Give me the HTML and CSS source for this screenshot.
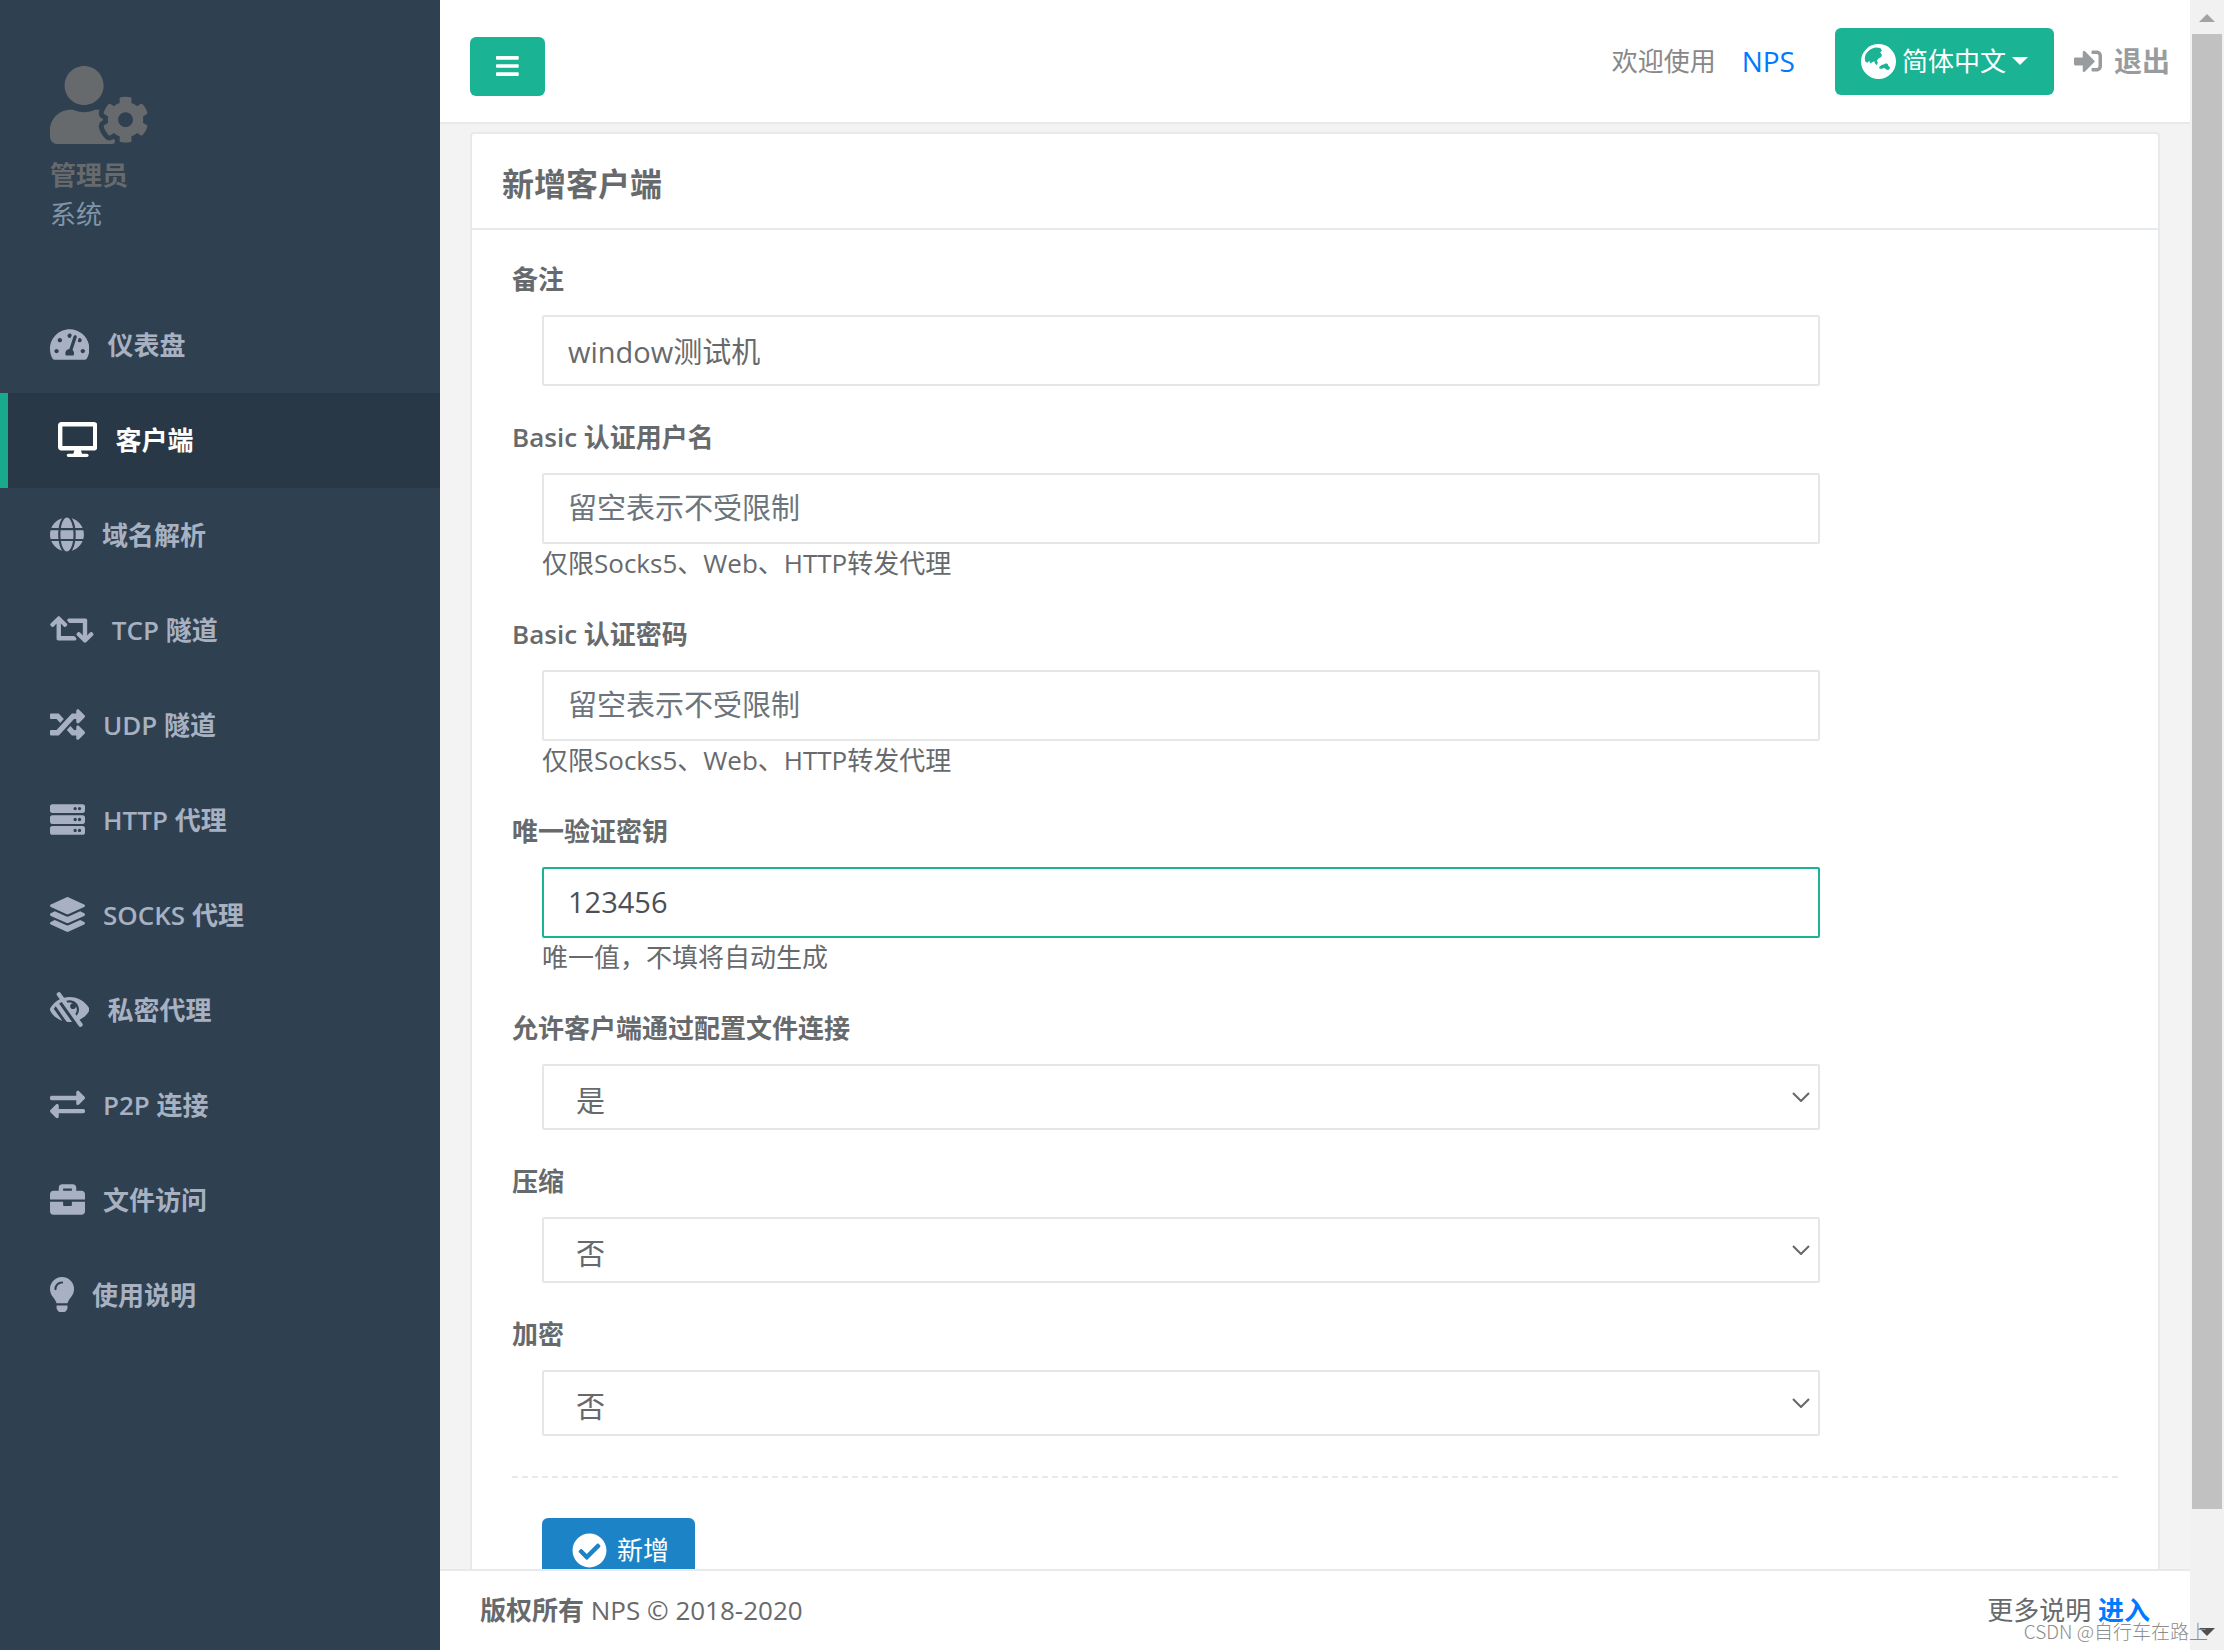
FILE: index.html
```html
<!DOCTYPE html>
<html lang="zh-CN">
<head>
<meta charset="utf-8">
<meta name="viewport" content="width=device-width, initial-scale=1">
<title>NPS</title>
<link rel="stylesheet" href="styles.css">
</head>
<body>
<div class="app">
  <aside class="sidebar">
    <div class="profile">
      <svg class="avatar" viewBox="0 0 640 512" aria-hidden="true"><path d="M610.5 373.3c2.6-14.1 2.6-28.5 0-42.6l25.8-14.9c3-1.7 4.3-5.2 3.3-8.5-6.7-21.6-18.2-41.2-33.2-57.4-2.3-2.5-6-3.1-9-1.4l-25.8 14.9c-10.9-9.3-23.4-16.5-36.9-21.3v-29.8c0-3.4-2.4-6.4-5.7-7.1-22.3-5-45-4.8-66.2 0-3.3.7-5.7 3.7-5.7 7.1v29.8c-13.5 4.8-26 12-36.9 21.3l-25.8-14.9c-2.9-1.7-6.7-1.1-9 1.4-15 16.2-26.5 35.8-33.2 57.4-1 3.3.4 6.8 3.3 8.5l25.8 14.9c-2.6 14.1-2.6 28.5 0 42.6l-25.8 14.9c-3 1.7-4.3 5.2-3.3 8.5 6.7 21.6 18.2 41.1 33.2 57.4 2.3 2.5 6 3.1 9 1.4l25.8-14.9c10.9 9.3 23.4 16.5 36.9 21.3v29.8c0 3.4 2.4 6.4 5.7 7.1 22.3 5 45 4.8 66.2 0 3.3-.7 5.7-3.7 5.7-7.1v-29.8c13.5-4.8 26-12 36.9-21.3l25.8 14.9c2.9 1.7 6.7 1.1 9-1.4 15-16.2 26.5-35.8 33.2-57.4 1-3.3-.4-6.8-3.3-8.5l-25.8-14.9zM496 400.5c-26.8 0-48.5-21.8-48.5-48.5s21.8-48.5 48.5-48.5 48.5 21.8 48.5 48.5-21.7 48.5-48.5 48.5zM224 256c70.7 0 128-57.3 128-128S294.7 0 224 0 96 57.3 96 128s57.3 128 128 128zm201.2 226.5c-2.3-1.2-4.6-2.6-6.8-3.9l-7.9 4.6c-6 3.4-12.8 5.3-19.6 5.3-10.9 0-21.4-4.6-28.9-12.6-18.3-19.8-32.3-43.9-40.2-69.6-5.5-17.7 1.9-36.4 17.9-45.7l7.9-4.6c-.1-2.6-.1-5.2 0-7.8l-7.9-4.6c-16-9.2-23.4-28-17.9-45.7.9-2.9 2.2-5.8 3.2-8.7-3.8-.3-7.5-1.2-11.4-1.2h-16.7c-22.2 10.2-46.9 16-72.9 16s-50.6-5.8-72.9-16h-16.7C60.2 288 0 348.2 0 422.4V464c0 26.5 21.5 48 48 48h352c10.1 0 19.5-3.2 27.2-8.5-1.2-3.8-2-7.7-2-11.8v-9.2z"/></svg>
      <strong class="profile-name">管理员</strong>
      <span class="profile-role">系统</span>
    </div>
    <nav>
      <ul class="menu">
        <li><a class="menu-link" href="#"><svg class="icon" viewBox="0 0 576 512"><path d="M288 32C128.94 32 0 160.94 0 320c0 52.8 14.25 102.26 39.06 144.8 5.61 9.62 16.3 15.2 27.44 15.2h443c11.14 0 21.83-5.58 27.44-15.2C561.75 422.26 576 372.8 576 320c0-159.06-128.94-288-288-288zm0 64c14.71 0 26.58 10.13 30.32 23.65-1.11 2.26-2.64 4.23-3.45 6.67l-9.22 27.67c-5.13 3.49-10.97 6.01-17.64 6.01-17.67 0-32-14.33-32-32S270.33 96 288 96zM96 384c-17.67 0-32-14.33-32-32s14.33-32 32-32 32 14.33 32 32-14.33 32-32 32zm48-160c-17.67 0-32-14.33-32-32s14.33-32 32-32 32 14.33 32 32-14.33 32-32 32zm246.77-72.41l-61.33 184C343.13 347.33 352 364.54 352 384c0 11.72-3.38 22.55-8.88 32H232.88c-5.5-9.45-8.88-20.28-8.88-32 0-33.94 26.5-61.43 59.9-63.59l61.34-184.01c4.17-12.56 17.73-19.45 30.36-15.17 12.57 4.19 19.35 17.79 15.17 30.36zm14.66 57.2l15.52-46.55c3.47-1.29 7.13-2.23 11.05-2.23 17.67 0 32 14.33 32 32s-14.33 32-32 32c-11.38-.01-20.89-6.28-26.57-15.22zM480 384c-17.67 0-32-14.33-32-32s14.33-32 32-32 32 14.33 32 32-14.33 32-32 32z"/></svg><span>仪表盘</span></a></li>
        <li><a class="menu-link menu-link-active" href="#" aria-current="page"><svg class="icon" viewBox="0 0 576 512"><path d="M528 0H48C21.5 0 0 21.5 0 48v320c0 26.5 21.5 48 48 48h192l-16 48h-72c-13.3 0-24 10.7-24 24s10.7 24 24 24h272c13.3 0 24-10.7 24-24s-10.7-24-24-24h-72l-16-48h192c26.5 0 48-21.5 48-48V48c0-26.5-21.5-48-48-48zm-16 352H64V64h448v288z"/></svg><span>客户端</span></a></li>
        <li><a class="menu-link" href="#"><svg class="icon" viewBox="0 0 496 512"><path d="M336.5 160C322 70.7 287.8 8 248 8s-74 62.7-88.5 152h177zM152 256c0 22.2 1.2 43.5 3.3 64h185.3c2.1-20.5 3.3-41.8 3.3-64s-1.2-43.5-3.3-64H155.3c-2.1 20.5-3.3 41.8-3.3 64zm324.7-96c-28.6-67.9-86.5-120.4-158-141.6 24.4 33.8 41.2 84.7 50 141.6h108zM177.2 18.4C105.8 39.6 47.8 92.1 19.3 160h108c8.7-56.9 25.5-107.8 49.9-141.6zM487.4 192H372.7c2.1 21 3.3 42.5 3.3 64s-1.2 43-3.3 64h114.6c5.5-20.5 8.6-41.8 8.6-64s-3.1-43.5-8.5-64zM120 256c0-21.5 1.2-43 3.3-64H8.6C3.2 212.5 0 233.8 0 256s3.2 43.5 8.6 64h114.6c-2-21-3.2-42.5-3.2-64zm39.5 96c14.5 89.3 48.7 152 88.5 152s74-62.7 88.5-152h-177zm159.3 141.6c71.4-21.2 129.4-73.7 158-141.6h-108c-8.8 56.9-25.6 107.8-50 141.6zM19.3 352c28.6 67.9 86.5 120.4 158 141.6-24.4-33.8-41.2-84.7-50-141.6h-108z"/></svg><span>域名解析</span></a></li>
        <li><a class="menu-link" href="#"><svg class="icon" viewBox="0 0 640 512"><path d="M629.657 343.598L528.971 444.284c-9.373 9.372-24.568 9.372-33.941 0L394.343 343.598c-9.373-9.373-9.373-24.569 0-33.941l10.823-10.823c9.562-9.562 25.133-9.34 34.419.492L480 342.118V160H292.451a24.005 24.005 0 0 1-16.971-7.029l-16-16C244.361 121.851 255.069 96 276.451 96H520c13.255 0 24 10.745 24 24v222.118l40.416-42.792c9.285-9.831 24.856-10.054 34.419-.492l10.823 10.823c9.372 9.372 9.372 24.569-.001 33.941zm-265.138 15.431A23.999 23.999 0 0 0 347.548 352H160V169.881l40.416 42.792c9.286 9.831 24.856 10.054 34.419.491l10.822-10.822c9.373-9.373 9.373-24.569 0-33.941L144.971 67.716c-9.373-9.373-24.569-9.373-33.941 0L10.343 168.402c-9.373 9.373-9.373 24.569 0 33.941l10.822 10.822c9.562 9.562 25.133 9.34 34.419-.491L96 169.882V392c0 13.255 10.745 24 24 24h243.549c21.382 0 32.09-25.851 16.971-40.971l-16.001-16z"/></svg><span><span class="latin">TCP</span> 隧道</span></a></li>
        <li><a class="menu-link" href="#"><svg class="icon" viewBox="0 0 512 512"><path d="M504.971 359.029c9.373 9.373 9.373 24.569 0 33.941l-80 79.984c-15.01 15.01-40.971 4.49-40.971-16.971V416h-58.785a12.004 12.004 0 0 1-8.773-3.812l-70.556-75.596 53.333-57.143L352 336h32v-39.981c0-21.438 25.943-31.998 40.971-16.971l80 79.981zM12 176h84l52.781 56.551 53.333-57.143-70.556-75.596A11.999 11.999 0 0 0 122.785 96H12c-6.627 0-12 5.373-12 12v56c0 6.627 5.373 12 12 12zm372 0v39.984c0 21.46 25.961 31.98 40.971 16.971l80-79.984c9.373-9.373 9.373-24.569 0-33.941l-80-79.981C409.943 24.021 384 34.582 384 56.019V96h-58.785a12.004 12.004 0 0 0-8.773 3.812L96 336H12c-6.627 0-12 5.373-12 12v56c0 6.627 5.373 12 12 12h110.785c3.326 0 6.503-1.381 8.773-3.812L352 176h32z"/></svg><span><span class="latin">UDP</span> 隧道</span></a></li>
        <li><a class="menu-link" href="#"><svg class="icon" viewBox="0 0 512 512"><path d="M480 160H32c-17.673 0-32-14.327-32-32V64c0-17.673 14.327-32 32-32h448c17.673 0 32 14.327 32 32v64c0 17.673-14.327 32-32 32zm-48-88c-13.255 0-24 10.745-24 24s10.745 24 24 24 24-10.745 24-24-10.745-24-24-24zm-64 0c-13.255 0-24 10.745-24 24s10.745 24 24 24 24-10.745 24-24-10.745-24-24-24zM480 320H32c-17.673 0-32-14.327-32-32v-64c0-17.673 14.327-32 32-32h448c17.673 0 32 14.327 32 32v64c0 17.673-14.327 32-32 32zm-48-88c-13.255 0-24 10.745-24 24s10.745 24 24 24 24-10.745 24-24-10.745-24-24-24zm-64 0c-13.255 0-24 10.745-24 24s10.745 24 24 24 24-10.745 24-24-10.745-24-24-24zM480 480H32c-17.673 0-32-14.327-32-32v-64c0-17.673 14.327-32 32-32h448c17.673 0 32 14.327 32 32v64c0 17.673-14.327 32-32 32zm-48-88c-13.255 0-24 10.745-24 24s10.745 24 24 24 24-10.745 24-24-10.745-24-24-24zm-64 0c-13.255 0-24 10.745-24 24s10.745 24 24 24 24-10.745 24-24-10.745-24-24-24z"/></svg><span><span class="latin">HTTP</span> 代理</span></a></li>
        <li><a class="menu-link" href="#"><svg class="icon" viewBox="0 0 512 512"><path d="M12.41 148.02l232.94 105.67c6.8 3.09 14.49 3.09 21.29 0l232.94-105.67c16.55-7.51 16.55-32.52 0-40.03L266.65 2.31a25.607 25.607 0 0 0-21.29 0L12.41 107.98c-16.55 7.51-16.55 32.53 0 40.04zm487.18 88.28l-58.09-26.33-161.64 73.27c-7.56 3.43-15.59 5.17-23.86 5.17s-16.29-1.74-23.86-5.17L70.51 209.97l-58.1 26.33c-16.55 7.5-16.55 32.5 0 40l232.94 105.59c6.8 3.08 14.49 3.08 21.29 0L499.59 276.3c16.55-7.5 16.55-32.5 0-40zm0 127.8l-57.87-26.23-161.86 73.37c-7.56 3.43-15.59 5.17-23.86 5.17s-16.29-1.74-23.86-5.17L70.29 337.87 12.41 364.1c-16.55 7.5-16.55 32.5 0 40l232.94 105.59c6.8 3.08 14.49 3.08 21.29 0L499.59 404.1c16.55-7.5 16.55-32.5 0-40z"/></svg><span><span class="latin">SOCKS</span> 代理</span></a></li>
        <li><a class="menu-link" href="#"><svg class="icon" viewBox="0 0 576 512"><path d="M569.344 231.631C512.96 135.949 407.81 72 288 72c-28.468 0-56.102 3.619-82.451 10.409L152.778 10.24c-7.601-10.858-22.564-13.5-33.423-5.9l-13.114 9.178c-10.86 7.601-13.502 22.566-5.9 33.426l43.131 58.395C89.449 131.73 40.228 174.683 6.682 231.581c-.01.017-.023.033-.034.05-8.765 14.875-8.964 33.528 0 48.739 38.5 65.332 99.742 115.862 172.859 141.349L55.316 244.302A272.194 272.194 0 0 1 83.61 208.39l119.4 170.58h.01l40.63 58.04a330.055 330.055 0 0 0 78.94 1.17l-189.98-271.4a277.628 277.628 0 0 1 38.777-21.563l251.836 356.544c7.601 10.858 22.564 13.499 33.423 5.9l13.114-9.178c10.86-7.601 13.502-22.567 5.9-33.426l-43.12-58.377-.007-.009c57.161-27.978 104.835-72.04 136.81-126.301a47.938 47.938 0 0 0 .001-48.739zM390.026 345.94l-19.066-27.23c24.682-32.567 27.711-76.353 8.8-111.68v.03c0 23.65-19.17 42.82-42.82 42.82-23.828 0-42.82-19.349-42.82-42.82 0-23.65 19.17-42.82 42.82-42.82h.03c-24.75-13.249-53.522-15.643-79.51-7.68l-19.068-27.237C253.758 123.306 270.488 120 288 120c75.162 0 136 60.826 136 136 0 34.504-12.833 65.975-33.974 89.94z"/></svg><span>私密代理</span></a></li>
        <li><a class="menu-link" href="#"><svg class="icon" viewBox="0 0 512 512"><path d="M0 168v-16c0-13.255 10.745-24 24-24h360V80c0-21.367 25.899-32.042 40.971-16.971l80 80c9.372 9.373 9.372 24.569 0 33.941l-80 80C409.956 271.982 384 261.456 384 240v-48H24c-13.255 0-24-10.745-24-24zm488 152H128v-48c0-21.314-25.862-32.08-40.971-16.971l-80 80c-9.372 9.373-9.372 24.569 0 33.941l80 80C102.057 463.997 128 453.437 128 432v-48h360c13.255 0 24-10.745 24-24v-16c0-13.255-10.745-24-24-24z"/></svg><span><span class="latin">P2P</span> 连接</span></a></li>
        <li><a class="menu-link" href="#"><svg class="icon" viewBox="0 0 512 512"><path d="M320 336c0 8.84-7.16 16-16 16h-96c-8.84 0-16-7.16-16-16v-48H0v144c0 25.6 22.4 48 48 48h416c25.6 0 48-22.4 48-48V288H320v48zm144-208h-80V80c0-25.6-22.4-48-48-48H176c-25.6 0-48 22.4-48 48v48H48c-25.6 0-48 22.4-48 48v80h512v-80c0-25.6-22.4-48-48-48zm-144 0H192V96h128v32z"/></svg><span>文件访问</span></a></li>
        <li><a class="menu-link" href="#"><svg class="icon" viewBox="0 0 352 512"><path d="M96.06 454.35c.01 6.29 1.87 12.45 5.36 17.69l17.09 25.69a31.99 31.99 0 0 0 26.64 14.28h61.71a31.99 31.99 0 0 0 26.64-14.28l17.09-25.69a31.989 31.989 0 0 0 5.36-17.69l.04-38.35H96.01l.05 38.35zM0 176c0 44.37 16.45 84.85 43.56 115.78 16.52 18.85 42.36 58.23 52.21 91.45.04.26.07.52.11.78h160.24c.04-.26.07-.51.11-.78 9.85-33.22 35.69-72.6 52.21-91.45C335.55 260.85 352 220.37 352 176 352 78.61 272.91-.3 175.45 0 73.44.31 0 82.97 0 176zm176-80c-44.11 0-80 35.89-80 80 0 8.84-7.16 16-16 16s-16-7.16-16-16c0-61.76 50.24-112 112-112 8.84 0 16 7.16 16 16s-7.16 16-16 16z"/></svg><span>使用说明</span></a></li>
      </ul>
    </nav>
  </aside>

  <div class="page">
    <header class="topbar">
      <button class="btn btn-menu" type="button" aria-label="菜单"><svg class="bars" viewBox="0 0 448 512"><path d="M16 132h416c8.837 0 16-7.163 16-16V76c0-8.837-7.163-16-16-16H16C7.163 60 0 67.163 0 76v40c0 8.837 7.163 16 16 16zm0 160h416c8.837 0 16-7.163 16-16v-40c0-8.837-7.163-16-16-16H16c-8.837 0-16 7.163-16 16v40c0 8.837 7.163 16 16 16zm0 160h416c8.837 0 16-7.163 16-16v-40c0-8.837-7.163-16-16-16H16c-8.837 0-16 7.163-16 16v40c0 8.837 7.163 16 16 16z"/></svg></button>
      <div class="topbar-right">
        <span class="welcome">欢迎使用</span>
        <a class="brand" href="#">NPS</a>
        <button class="btn btn-lang" type="button" aria-haspopup="true"><svg class="icon" viewBox="34 27 102 102"><path fill-rule="evenodd" d="M85 27a51 51 0 1 0 0 102a51 51 0 1 0 0-102zM46 62C51 48 63 39 78 37L90 39L95 46L90 52L95 58L93 65L85 69L80 75L83 81L80 89L75 84L73 77L67 80L61 84L58 76L53 82L47 79L45 70zM87 94L94 88L102 86L106 83L112 85L113 90L119 96L115 102L108 102L103 97L94 99L88 99z"/></svg><span>简体中文</span><svg class="caret" viewBox="0 0 16 8"><path d="M0 0h16l-8 8z"/></svg></button>
        <a class="logout" href="#"><svg class="logout-icon" viewBox="0 0 512 512"><path d="M416 448h-84c-6.6 0-12-5.4-12-12v-40c0-6.6 5.4-12 12-12h84c17.7 0 32-14.3 32-32V160c0-17.7-14.3-32-32-32h-84c-6.6 0-12-5.4-12-12V76c0-6.6 5.4-12 12-12h84c53 0 96 43 96 96v192c0 53-43 96-96 96zm-47-201L201 79c-15-15-41-4.5-41 17v96H24c-13.3 0-24 10.7-24 24v96c0 13.3 10.7 24 24 24h136v96c0 21.5 26 32 41 17l168-168c9.3-9.4 9.3-24.6 0-34z"/></svg><span>退出</span></a>
      </div>
    </header>

    <main class="content">
      <section class="card">
        <h1 class="card-title">新增客户端</h1>
        <form class="form">
          <div class="group">
            <label class="label" for="remark">备注</label>
            <div class="field"><input class="control" id="remark" type="text" value="window测试机"></div>
          </div>
          <div class="group">
            <label class="label" for="user"><span class="latin">Basic</span> 认证用户名</label>
            <div class="field"><input class="control" id="user" type="text" placeholder="留空表示不受限制"><span class="help">仅限Socks5、Web、HTTP转发代理</span></div>
          </div>
          <div class="group">
            <label class="label" for="password"><span class="latin">Basic</span> 认证密码</label>
            <div class="field"><input class="control" id="password" type="text" placeholder="留空表示不受限制"><span class="help">仅限Socks5、Web、HTTP转发代理</span></div>
          </div>
          <div class="group">
            <label class="label" for="vkey">唯一验证密钥</label>
            <div class="field"><input class="control control-active" id="vkey" type="text" value="123456"><span class="help">唯一值，不填将自动生成</span></div>
          </div>
          <div class="group">
            <label class="label" for="config">允许客户端通过配置文件连接</label>
            <div class="field select-box"><select class="control select" id="config"><option>是</option><option>否</option></select><svg class="chevron" viewBox="0 0 18 10"><path d="M1 1l8 8 8-8"/></svg></div>
          </div>
          <div class="group">
            <label class="label" for="compress">压缩</label>
            <div class="field select-box"><select class="control select" id="compress"><option>否</option><option>是</option></select><svg class="chevron" viewBox="0 0 18 10"><path d="M1 1l8 8 8-8"/></svg></div>
          </div>
          <div class="group">
            <label class="label" for="crypt">加密</label>
            <div class="field select-box"><select class="control select" id="crypt"><option>否</option><option>是</option></select><svg class="chevron" viewBox="0 0 18 10"><path d="M1 1l8 8 8-8"/></svg></div>
          </div>
          <hr class="divider">
          <div class="field"><button class="btn btn-add" type="button"><svg class="icon" viewBox="0 0 512 512"><path d="M504 256c0 136.967-111.033 248-248 248S8 392.967 8 256 119.033 8 256 8s248 111.033 248 248zM227.314 387.314l184-184c6.248-6.248 6.248-16.379 0-22.627l-22.627-22.627c-6.248-6.249-16.379-6.249-22.628 0L216 308.118l-70.059-70.059c-6.248-6.248-16.379-6.248-22.628 0l-22.627 22.627c-6.248 6.248-6.248 16.379 0 22.627l104 104c6.249 6.249 16.379 6.249 22.628.001z"/></svg><span>新增</span></button></div>
        </form>
      </section>
    </main>

    <footer class="footer">
      <div><strong>版权所有</strong> NPS © 2018-2020</div>
      <div>更多说明 <a class="more" href="#">进入</a></div>
    </footer>
  </div>

  <div class="scrollbar" aria-hidden="true">
    <svg class="scroll-arrow" viewBox="0 0 34 34"><path fill="#a3a3a3" d="M9 22l8-8 8 8z"/></svg>
    <div class="scroll-track"><div class="scroll-thumb"></div></div>
    <svg class="scroll-arrow" viewBox="0 0 34 34"><path fill="#505050" d="M9 12h16l-8 8z"/></svg>
  </div>
  <span class="watermark">CSDN @自行车在路上</span>
</div>
</body>
</html>
```
FILE: styles.css
```css
* {
  box-sizing: border-box;
}

body {
  margin: 0;
  color: #676a6c;
  background: #f3f3f4;
  font-family: "Open Sans", "Noto Sans CJK SC", sans-serif;
  font-size: 26px;
  line-height: 39px;
}

a {
  color: #007bff;
  text-decoration: none;
}

svg {
  fill: currentColor;
}

.latin {
  font-weight: 600;
}

.app {
  position: relative;
  display: flex;
  height: 100vh;
  overflow: hidden;
}

/* Sidebar */
.sidebar {
  flex: 0 0 440px;
  background: #2f4050;
}

.profile {
  display: flex;
  flex-direction: column;
  align-items: flex-start;
  padding: 66px 50px 64px;
}

.avatar {
  height: 78px;
  margin-bottom: 12px;
}

.profile-name {
  font-weight: 700;
}

.profile-role {
  color: #8095a8;
}

.menu {
  margin: 0;
  padding: 0;
  list-style: none;
}

.menu-link {
  display: flex;
  align-items: center;
  gap: 18px;
  height: 95px;
  padding: 0 50px;
  color: #a7b1c2;
  font-weight: 700;
}

.menu-link-active {
  border-left: 8px solid #19aa8d;
  background: #293846;
  color: #fff;
}

.icon {
  height: 35px;
}

.menu-link .icon {
  margin-bottom: 3px;
}

/* Top bar */
.page {
  display: flex;
  flex: 1;
  flex-direction: column;
  min-width: 0;
}

.topbar {
  display: flex;
  align-items: center;
  justify-content: space-between;
  height: 124px;
  padding: 0 20px 0 30px;
  border-bottom: 2px solid #e7eaec;
  background: #fff;
}

.topbar-right {
  display: flex;
  align-items: center;
}

.btn {
  display: flex;
  align-items: center;
  justify-content: center;
  border: 0;
  border-radius: 6px;
  color: #fff;
  background: #1ab394;
  font: inherit;
}

.btn-menu {
  width: 75px;
  height: 59px;
  margin-top: 10px;
}

.bars {
  height: 26px;
}

.welcome {
  color: #888;
}

.brand {
  margin: 0 40px 0 26px;
  font-size: 28px;
}

.btn-lang {
  gap: 6px;
  height: 67px;
  padding: 0 26px;
}

.caret {
  width: 16px;
}

.logout {
  display: flex;
  align-items: center;
  gap: 12px;
  margin-left: 20px;
  color: #999c9e;
  font-size: 28px;
  font-weight: 700;
}

.logout-icon {
  height: 28px;
}

/* Card and form */
.content {
  flex: 1;
  min-height: 0;
  padding: 8px 30px 0;
  overflow: hidden;
}

.card {
  border: 2px solid #e7eaec;
  border-radius: 4px;
  background: #fff;
}

.card-title {
  margin: 0;
  padding: 30px 30px 24px;
  border-bottom: 2px solid #e7eaec;
  font-size: 32px;
  font-weight: 700;
  line-height: 40px;
}

.form {
  padding: 30px 40px 40px;
}

.group {
  margin-bottom: 32px;
}

.label {
  display: block;
  margin-bottom: 16px;
  font-weight: 700;
}

.field {
  width: calc(100% * 10 / 12);
  padding: 0 30px;
}

.control {
  display: block;
  width: 100%;
  height: 71px;
  padding: 0 24px 2px;
  border: 2px solid #e5e6e7;
  border-radius: 2px;
  outline: 0;
  color: inherit;
  background: #fff;
  font: inherit;
  font-size: 29px;
}

.control::placeholder {
  color: #6c757d;
  opacity: 1;
}

.control-active {
  border-color: #1ab394;
  color: #495057;
}

.help {
  display: block;
}

.select-box {
  display: grid;
  align-items: center;
}

.select {
  grid-area: 1 / 1;
  height: 66px;
  padding: 6px 32px 0;
  appearance: none;
}

.chevron {
  grid-area: 1 / 1;
  justify-self: end;
  width: 18px;
  margin-right: 10px;
  fill: none;
  stroke: #666;
  stroke-width: 2;
  pointer-events: none;
}

.divider {
  height: 0;
  margin: 40px 0;
  border: 0;
  border-top: 2px dashed #e7eaec;
}

.btn-add {
  gap: 10px;
  height: 65px;
  padding: 0 26px 0 30px;
  background: #1c84c6;
}

/* Footer */
.footer {
  display: flex;
  justify-content: space-between;
  padding: 20px 40px;
  border-top: 2px solid #e7eaec;
  background: #fff;
}

.more {
  font-weight: 700;
}

/* Scrollbar */
.scrollbar {
  display: flex;
  flex: 0 0 34px;
  flex-direction: column;
  background: #f1f1f1;
}

.scroll-arrow {
  width: 34px;
}

.scroll-track {
  display: flex;
  flex: 1;
  padding: 0 2px 107px;
}

.scroll-thumb {
  flex: 1;
  background: #c1c1c1;
}

.watermark {
  position: absolute;
  right: 16px;
  bottom: 4px;
  color: #8c8c8c;
  font-family: "Noto Sans CJK SC", sans-serif;
  font-size: 19px;
  font-weight: 300;
  line-height: 30px;
}
```
